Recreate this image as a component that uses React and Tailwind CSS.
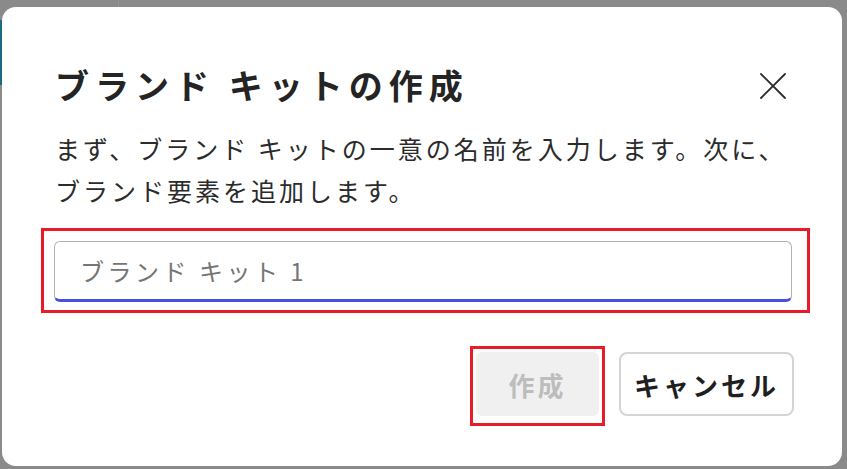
const FONT = { fontFamily: '"Noto Sans CJK JP", "Noto Sans", sans-serif' };

function CloseIcon() {
  return (
    <svg width="26" height="26" viewBox="0 0 26 26" fill="none" stroke="#2b2b2b" strokeWidth="1.8" strokeLinecap="round">
      <path d="M1 1 L25 25 M25 1 L1 25" />
    </svg>
  );
}

export default function App() {
  return (
    <div className="relative w-[847px] h-[469px] overflow-hidden bg-[#8a8a8a]" style={FONT}>
      {/* backdrop leftovers */}
      <div className="absolute left-0 top-[20px] w-[2px] h-[65px] bg-[#1e6a86]" />
      <div className="absolute left-[118px] top-0 w-px h-[7px] bg-[#949494]" />

      <div className="absolute left-[2px] top-[7px] w-[840px] h-[459px] rounded-[14px] bg-white">
        <div className="flex items-start justify-between pl-[53px] pr-[56px] pt-[58px]">
          <h1 className="text-[34px] leading-[40px] font-bold text-[#242424] tracking-[6px]">
            ブランド キットの作成
          </h1>
          <button className="mt-[8px]">
            <CloseIcon />
          </button>
        </div>

        <p className="mt-[22px] pl-[53px] pr-[40px] text-[25px] leading-[42px] text-[#2b2b2b] tracking-[3px] whitespace-nowrap">
          まず、ブランド キットの一意の名前を入力します。次に、
          <br />
          ブランド要素を追加します。
        </p>

        <div className="mt-[17px] ml-[39px] w-[769px] h-[85px] border-[3px] border-[#e81c28] p-[10px]">
          <div className="h-[61px] w-[738px] rounded-[6px] border border-[#b3b3b3] border-b-[3px] border-b-[#4650e0] flex items-center pl-[25px]">
            <span className="text-[24px] text-[#757575] tracking-[3.5px]">ブランド キット 1</span>
          </div>
        </div>

        <div className="mt-[33px] flex justify-end items-start pr-[48px] gap-[14px]">
          <div className="border-[3px] border-[#e81c28] p-[3px] w-[135px] h-[80px]">
            <button className="w-full h-[64px] rounded-[6px] bg-[#f0f0f0] text-[#bdbdbd] text-[26px] font-bold tracking-[3px]">
              作成
            </button>
          </div>
          <button className="mt-[6px] w-[175px] h-[64px] rounded-[8px] border-2 border-[#d4d4d4] bg-white text-[#1f1f1f] text-[26px] font-bold tracking-[3px]">
            キャンセル
          </button>
        </div>
      </div>
    </div>
  );
}
